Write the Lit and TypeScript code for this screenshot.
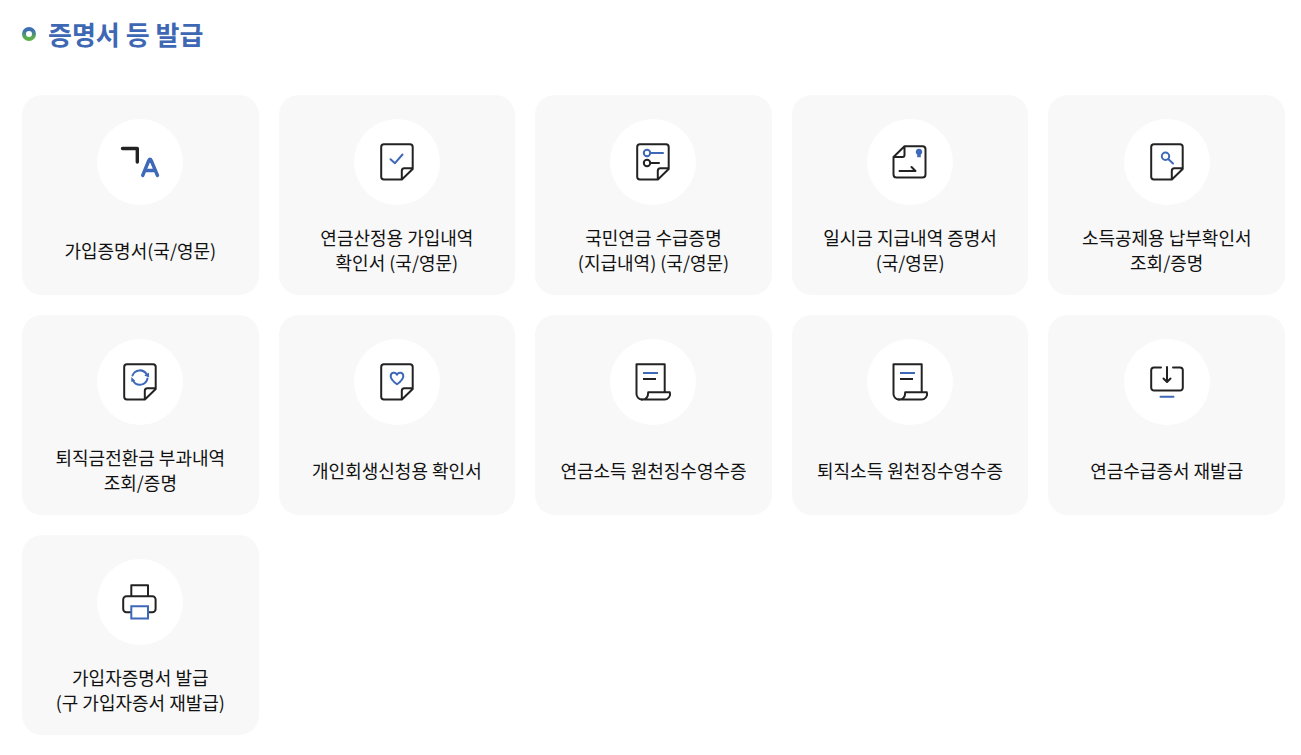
import { LitElement, html, css, svg, type SVGTemplateResult } from "lit";
import { customElement } from "lit/decorators.js";

const sheet = svg`
  <path class="ink" d="M58.700 49.500V28a2.700 2.700 0 0 0-2.700-2.700H29.900a2.700 2.700 0 0 0-2.700 2.700v29.800a2.700 2.700 0 0 0 2.700 2.700h18L58.700 50V49.200H50.300a2.500 2.500 0 0 0-2.500 2.500v8.600"/>`;

const scroll = svg`
  <path class="ink" d="M54.700 53V25.200H26.500V55a5.500 5.500 0 0 0 5.500 5.500"/>
  <path class="ink" d="M31.500 60.500H54.500a5.500 5.500 0 0 0 5.300-7.300H38.200c0 4-1.500 7.300-6 7.300"/>
  <path class="blue butt" d="M33 34H48"/>
  <path class="ink butt" d="M33 40H46"/>`;

const icons: Record<string, SVGTemplateResult> = {
  language: svg`
    <path class="ink thick" d="M25.500 29.500H40.300V43"/>
    <path class="blue thick" d="M45.700 56.500L51.800 41.500Q53 39 54.200 41.500L60.500 56.500M48 51.500H58"/>`,
  check: svg`${sheet}<path class="blue" d="M36.500 40.200L41 44.200L48.500 35.500"/>`,
  list: svg`${sheet}
    <circle class="blue" cx="37" cy="34" r="3.200"/>
    <path class="blue" d="M40.500 34H53"/>
    <circle class="ink" cx="37" cy="44" r="3.200"/>
    <path class="ink" d="M40.500 44H49"/>`,
  payment: svg`
    <path class="ink" d="M37.500 27.200H55.500a3 3 0 0 1 3 3V55.500a3 3 0 0 1-3 3H29.500a3 3 0 0 1-3-3V38L37.500 27.200V36a2 2 0 0 1-2 2H26.500"/>
    <path class="blue-fill" d="M52 29.800a3.200 3.200 0 0 1 1.800 5.900v2.600h-3.600v-2.600A3.200 3.200 0 0 1 52 29.800z"/>
    <path class="ink" d="M32.500 52H48.500L44.500 48"/>`,
  search: svg`${sheet}
    <circle class="blue" cx="41.500" cy="37.300" r="3.700"/>
    <path class="blue" d="M44.500 40.200L49 44.500"/>`,
  refresh: svg`${sheet}
    <path class="blue" d="M35.500 36.500A7.800 7.800 0 0 1 49.700 35.500M50.500 39.500A7.800 7.800 0 0 1 36.200 42"/>
    <path class="blue-fill" d="M51.800 33.500L52.200 38.200L47.300 36.800zM34.300 38L38.300 41.800L34.200 42.800z"/>`,
  heart: svg`${sheet}
    <path class="blue" d="M43 45.200C39.500 42.800 36.700 40.400 36.700 37.300C36.700 33.200 41.200 32.600 43 35.700C44.800 32.600 49.300 33.200 49.300 37.300C49.300 40.400 46.500 42.800 43 45.200z"/>`,
  receipt: scroll,
  download: svg`
    <path class="ink" d="M37 28.500H30a2.800 2.800 0 0 0-2.800 2.800V48.700a2.800 2.800 0 0 0 2.800 2.800H56a2.800 2.800 0 0 0 2.800-2.800V31.300a2.800 2.800 0 0 0-2.800-2.800H49"/>
    <path class="ink" d="M43 28V42.500M39.500 39.500L43 43L46.500 39.500"/>
    <path class="blue" d="M36.500 57.700H49.500"/>`,
  printer: svg`
    <path class="ink" d="M34.300 36.500V26.200H51V36.500"/>
    <path class="ink" d="M34 53.200H29.500a3.300 3.300 0 0 1-3.300-3.300V40.500a3.300 3.300 0 0 1 3.300-3.300H55.300a3.300 3.300 0 0 1 3.300 3.300V49.900a3.300 3.300 0 0 1-3.300 3.300H51.500"/>
    <path class="blue sharp" d="M34.300 47.200H51V59.500H34.300z"/>`,
};

interface Certificate {
  icon: string;
  lines: string[];
}

const certificates: Certificate[] = [
  { icon: "language", lines: ["가입증명서(국/영문)"] },
  { icon: "check", lines: ["연금산정용 가입내역", "확인서 (국/영문)"] },
  { icon: "list", lines: ["국민연금 수급증명", "(지급내역) (국/영문)"] },
  { icon: "payment", lines: ["일시금 지급내역 증명서", "(국/영문)"] },
  { icon: "search", lines: ["소득공제용 납부확인서", "조회/증명"] },
  { icon: "refresh", lines: ["퇴직금전환금 부과내역", "조회/증명"] },
  { icon: "heart", lines: ["개인회생신청용 확인서"] },
  { icon: "receipt", lines: ["연금소득 원천징수영수증"] },
  { icon: "receipt", lines: ["퇴직소득 원천징수영수증"] },
  { icon: "download", lines: ["연금수급증서 재발급"] },
  { icon: "printer", lines: ["가입자증명서 발급", "(구 가입자증서 재발급)"] },
];

@customElement("app-root")
export class AppRoot extends LitElement {
  static styles = css`
    :host {
      display: block;
      padding: 16px 16px 20px 22px;
      background: #fff;
      color: #111;
      font-family: "Noto Sans CJK KR", "Noto Sans", sans-serif;
    }
    .title {
      display: flex;
      align-items: center;
      gap: 12px;
      margin: 0 0 43px;
      font-size: 26px;
      line-height: 36px;
      font-weight: 700;
      color: #3e68b3;
    }
    .ring {
      width: 14px;
      height: 14px;
      flex: none;
    }
    .grid {
      display: grid;
      grid-template-columns: repeat(5, minmax(0, 1fr));
      gap: 20px;
      margin: 0;
      padding: 0;
      list-style: none;
    }
    .item {
      display: flex;
    }
    .card {
      flex: 1;
      display: flex;
      flex-direction: column;
      align-items: center;
      gap: 20px;
      box-sizing: border-box;
      min-height: 200px;
      padding: 24px 8px 20px;
      border-radius: 20px;
      background: #f8f8f8;
      color: inherit;
      text-decoration: none;
    }
    .icon {
      width: 86px;
      height: 86px;
      flex: none;
      border-radius: 50%;
      background: #fff;
    }
    .label {
      flex: 1;
      display: flex;
      flex-direction: column;
      justify-content: center;
      font-size: 18px;
      line-height: 25px;
      text-align: center;
    }
    .ink,
    .blue {
      fill: none;
      stroke: #222;
      stroke-width: 2;
      stroke-linecap: round;
      stroke-linejoin: round;
    }
    .blue {
      stroke: #3e68b8;
    }
    .thick {
      stroke-width: 3.4;
    }
    .butt {
      stroke-linecap: butt;
    }
    .sharp {
      stroke-linejoin: miter;
    }
    .blue-fill {
      fill: #3e68b8;
    }
  `;

  render() {
    return html`
      <h2 class="title">
        <svg class="ring" viewBox="0 0 14 14" aria-hidden="true">
          <defs>
            <linearGradient id="ring" x1="0" y1="0" x2="0" y2="1">
              <stop offset="0.1" stop-color="#3f6db4" />
              <stop offset="0.9" stop-color="#5bb04a" />
            </linearGradient>
          </defs>
          <circle cx="7" cy="7" r="5" fill="none" stroke="url(#ring)" stroke-width="4" />
        </svg>
        <span>증명서 등 발급</span>
      </h2>
      <ul class="grid">
        ${certificates.map(
          (c) => html`
            <li class="item">
              <a class="card" href="#">
                <svg class="icon" viewBox="0 0 86 86" aria-hidden="true">${icons[c.icon]}</svg>
                <span class="label">${c.lines.map((line) => html`<span>${line}</span>`)}</span>
              </a>
            </li>
          `,
        )}
      </ul>
    `;
  }
}
